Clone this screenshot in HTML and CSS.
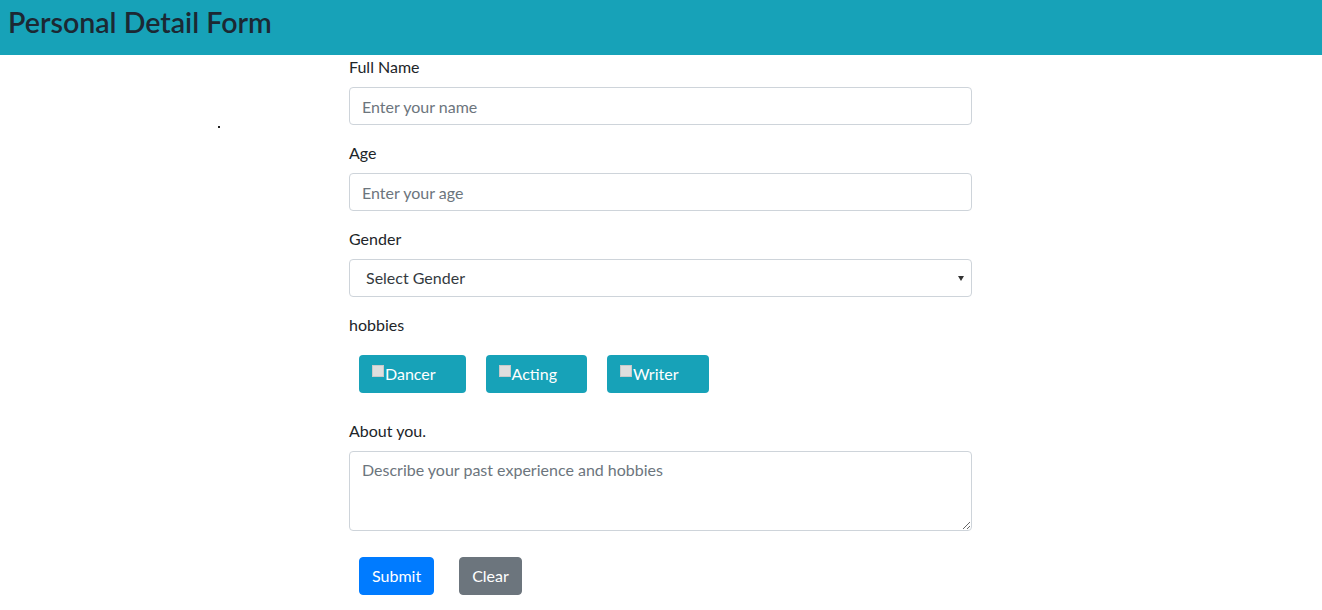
FILE: index.html
```html
<!DOCTYPE html>
<html lang="en">
<head>
<meta charset="utf-8">
<title>Personal Detail Form</title>
<link rel="stylesheet" href="styles.css">
</head>
<body>
<header class="topbar">
  <h3 class="title">Personal Detail Form</h3>
</header>
<span class="stray-dot"></span>
<main class="page">
  <form class="form">
    <div class="group">
      <label class="label" for="name">Full Name</label>
      <input class="control" id="name" type="text" placeholder="Enter your name">
    </div>
    <div class="group">
      <label class="label" for="age">Age</label>
      <input class="control" id="age" type="text" placeholder="Enter your age">
    </div>
    <div class="group">
      <label class="label" for="gender">Gender</label>
      <div class="select-wrap">
        <select class="control select" id="gender">
          <option>Select Gender</option>
          <option>Male</option>
          <option>Female</option>
        </select>
      </div>
    </div>
    <div class="group">
      <label class="label">hobbies</label>
      <div class="hobbies">
        <label class="hobby"><input type="checkbox" class="check">Dancer</label>
        <label class="hobby"><input type="checkbox" class="check">Acting</label>
        <label class="hobby"><input type="checkbox" class="check">Writer</label>
      </div>
    </div>
    <div class="group">
      <label class="label" for="about">About you.</label>
      <textarea class="control area" id="about" placeholder="Describe your past experience and hobbies"></textarea>
    </div>
    <div class="actions">
      <button type="button" class="btn btn-primary">Submit</button>
      <button type="reset" class="btn btn-secondary">Clear</button>
    </div>
  </form>
</main>
</body>
</html>
```

FILE: styles.css
```css
* { box-sizing: border-box; }

html, body {
  margin: 0;
  padding: 0;
  background: #fff;
  font-family: "Lato", "Open Sans", sans-serif;
  font-size: 16px;
  line-height: 1.5;
  color: #212529;
}

.topbar {
  height: 55px;
  background: #17a2b8;
  display: flex;
  align-items: flex-start;
  padding: 5px 0 0 8px;
}

.title {
  margin: 0;
  font-size: 28.6px;
  font-weight: 600;
  line-height: 1.2;
  color: #1c2833;
}

.stray-dot {
  position: absolute;
  left: 218px;
  top: 126px;
  width: 2px;
  height: 2px;
  background: #222;
}

.page {
  padding-left: 349px;
}

.form {
  width: 623px;
}

.group {
  margin-bottom: 16px;
}

.label {
  display: inline-block;
  margin-bottom: 8px;
}

.control {
  display: block;
  width: 100%;
  height: 38px;
  padding: 6px 12px;
  font-family: inherit;
  font-size: 16px;
  line-height: 1.5;
  color: #495057;
  background: #fff;
  border: 1px solid #ced4da;
  border-radius: 4px;
}

.control::placeholder {
  color: #6c757d;
  opacity: 1;
}

.select-wrap {
  position: relative;
}

.select {
  appearance: none;
  -webkit-appearance: none;
  padding-left: 16px;
  color: #343a40;
}

.select-wrap::after {
  content: "";
  position: absolute;
  right: 8px;
  top: 17px;
  border-left: 3px solid transparent;
  border-right: 3px solid transparent;
  border-top: 5px solid #333;
  pointer-events: none;
}

.area {
  height: 80px;
  resize: vertical;
}

.hobbies {
  display: flex;
}

.hobby {
  display: flex;
  align-items: center;
  height: 38px;
  margin: 10px;
  padding: 0 30px 0 13px;
  background: #17a2b8;
  color: #fff;
  border-radius: 4px;
  font-size: 16px;
}

.check {
  appearance: none;
  -webkit-appearance: none;
  width: 12px;
  height: 12px;
  margin: -6px 1px 0 0;
  background: #dedede;
  border: 1px solid #c9c9c9;
  border-radius: 0;
}

.actions {
  display: flex;
  gap: 4px;
}

.btn {
  height: 38px;
  margin: 10px;
  padding: 6px 12px;
  font-family: inherit;
  font-size: 16px;
  line-height: 1.5;
  color: #fff;
  border: 1px solid transparent;
  border-radius: 4px;
}

.btn-primary {
  background: #007bff;
  border-color: #007bff;
}

.btn-secondary {
  background: #6c757d;
  border-color: #6c757d;
  margin-left: 11px;
}
```
